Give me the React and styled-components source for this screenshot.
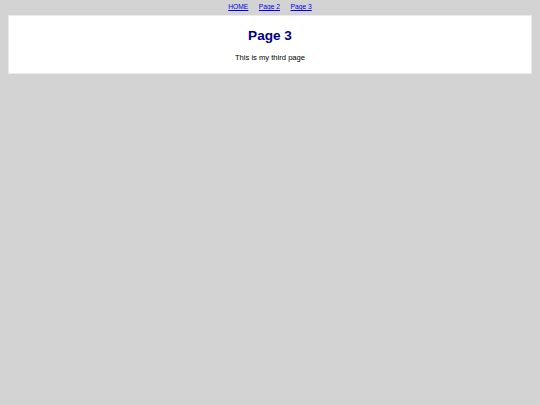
import React from 'react'
import styled, { createGlobalStyle } from 'styled-components'

const GlobalStyle = createGlobalStyle`
  html, body {
    margin: 0;
    padding: 0;
    background: #d3d3d3;
    font-family: Arial, "Liberation Sans", sans-serif;
  }
  body {
    min-height: 405px;
  }
`

const Page = styled.div`
  padding: 0 8px 8px;
`

const Nav = styled.nav`
  display: flex;
  justify-content: center;
  gap: 10.5px;
  height: 15px;
  padding-top: 3px;
  box-sizing: border-box;
  font-size: 6.7px;
`

const NavLink = styled.a`
  color: #0000ee;
  text-decoration: underline;
  line-height: 1.15;
`

const Content = styled.main`
  background: #ffffff;
  border: 1px solid #ebebeb;
  height: 59px;
  box-sizing: border-box;
  padding-top: 12px;
  text-align: center;
`

const Title = styled.h1`
  margin: 0;
  font-size: 13.6px;
  font-weight: bold;
  color: #000080;
  line-height: 1.15;
`

const Text = styled.p`
  margin: 10px 0 0;
  font-size: 7.6px;
  color: #000;
  line-height: 1.15;
`

export default function App() {
  return (
    <Page>
      <GlobalStyle />
      <Nav>
        <NavLink href="#">HOME</NavLink>
        <NavLink href="#">Page 2</NavLink>
        <NavLink href="#">Page 3</NavLink>
      </Nav>
      <Content>
        <Title>Page 3</Title>
        <Text>This is my third page</Text>
      </Content>
    </Page>
  )
}
